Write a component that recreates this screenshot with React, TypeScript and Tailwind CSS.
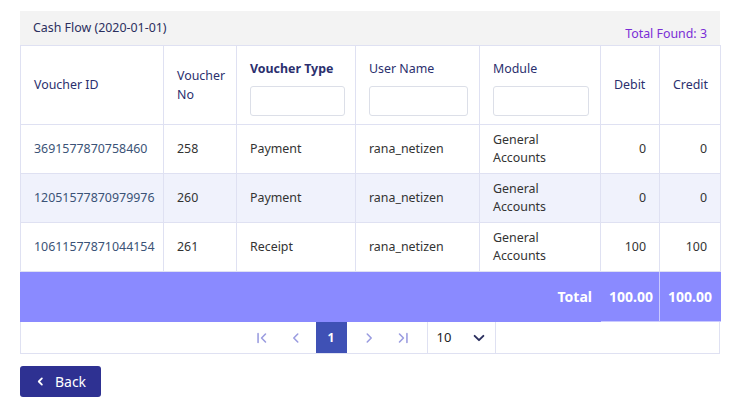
import React from 'react';

interface Voucher {
  id: string;
  no: number;
  type: string;
  user: string;
  module: string;
  debit: number;
  credit: number;
}

const rows: Voucher[] = [
  { id: '3691577870758460', no: 258, type: 'Payment', user: 'rana_netizen', module: 'General Accounts', debit: 0, credit: 0 },
  { id: '12051577870979976', no: 260, type: 'Payment', user: 'rana_netizen', module: 'General Accounts', debit: 0, credit: 0 },
  { id: '10611577871044154', no: 261, type: 'Receipt', user: 'rana_netizen', module: 'General Accounts', debit: 100, credit: 100 },
];

const ChevronLeft = ({ className, w = 1.8 }: { className?: string; w?: number }) => (
  <svg viewBox="0 0 16 16" className={className} fill="none" stroke="currentColor" strokeWidth={w} strokeLinecap="round" strokeLinejoin="round">
    <path d="M10 3.5 5.5 8l4.5 4.5" />
  </svg>
);

const ChevronRight = ({ className }: { className?: string }) => (
  <svg viewBox="0 0 16 16" className={className} fill="none" stroke="currentColor" strokeWidth="1.8" strokeLinecap="round" strokeLinejoin="round">
    <path d="M6 3.5 10.5 8 6 12.5" />
  </svg>
);

const FirstIcon = ({ className }: { className?: string }) => (
  <svg viewBox="0 0 16 16" className={className} fill="none" stroke="currentColor" strokeWidth="1.8" strokeLinecap="round" strokeLinejoin="round">
    <path d="M3.5 3v10" />
    <path d="M12 3.5 7.5 8l4.5 4.5" />
  </svg>
);

const LastIcon = ({ className }: { className?: string }) => (
  <svg viewBox="0 0 16 16" className={className} fill="none" stroke="currentColor" strokeWidth="1.8" strokeLinecap="round" strokeLinejoin="round">
    <path d="M4 3.5 8.5 8 4 12.5" />
    <path d="M12.5 3v10" />
  </svg>
);

const ChevronDown = ({ className }: { className?: string }) => (
  <svg viewBox="0 0 16 16" className={className} fill="none" stroke="currentColor" strokeWidth="2.2" strokeLinecap="round" strokeLinejoin="round">
    <path d="M3 5.5 8 10.5 13 5.5" />
  </svg>
);

const App: React.FC = () => {
  const cell = 'border border-[#dfe1f2] px-[13px]';
  return (
    <div className="min-h-screen bg-white pl-5 pt-[11px] text-[12.4px] text-[#333] [font-family:'Segoe_UI','Noto_Sans',sans-serif]">
      <div className="w-[700px]">
        {/* header bar */}
        <div className="flex h-[34px] items-start justify-between bg-[#f3f3f3] px-[13px]">
          <span className="mt-[8px] text-[#2b2f5e]">Cash Flow (2020-01-01)</span>
          <span className="mt-[14px] text-[#7a2ed6]">Total Found: 3</span>
        </div>

        <table className="w-full table-fixed border-collapse">
          <colgroup>
            <col className="w-[143px]" />
            <col className="w-[73px]" />
            <col className="w-[119px]" />
            <col className="w-[124px]" />
            <col className="w-[121px]" />
            <col className="w-[59px]" />
            <col className="w-[61px]" />
          </colgroup>
          <thead>
            <tr className="h-[79px] text-left text-[#2b2f6e]">
              <th className={`${cell} font-normal`}>Voucher ID</th>
              <th className={`${cell} font-normal leading-[19px]`}>Voucher No</th>
              <th className={`${cell} align-top pt-[14px] font-bold`}>
                <div>Voucher Type</div>
                <input className="mt-[7px] h-[30px] w-[95px] rounded-[3px] border border-[#dcdfe8] bg-white outline-none" />
              </th>
              <th className={`${cell} align-top pt-[14px] font-normal`}>
                <div>User Name</div>
                <input className="mt-[7px] h-[30px] w-[99px] rounded-[3px] border border-[#dcdfe8] bg-white outline-none" />
              </th>
              <th className={`${cell} align-top pt-[14px] font-normal`}>
                <div>Module</div>
                <input className="mt-[7px] h-[30px] w-[96px] rounded-[3px] border border-[#dcdfe8] bg-white outline-none" />
              </th>
              <th className={`${cell} font-normal`}>Debit</th>
              <th className={`${cell} font-normal`}>Credit</th>
            </tr>
          </thead>
          <tbody>
            {rows.map((r, i) => (
              <tr key={r.id} className={`h-[49px] ${i % 2 === 1 ? 'bg-[#f0f2fc]' : 'bg-white'}`}>
                <td className={`${cell} text-[#3b5377]`}>{r.id}</td>
                <td className={cell}>{r.no}</td>
                <td className={cell}>{r.type}</td>
                <td className={cell}>{r.user}</td>
                <td className={`${cell} leading-[18px]`}>{r.module}</td>
                <td className={`${cell} text-right`}>{r.debit}</td>
                <td className={`${cell} text-right`}>{r.credit}</td>
              </tr>
            ))}
            <tr className="h-[50px] bg-[#8a8aff] text-[14px] font-bold text-white">
              <td colSpan={5} className="border border-[#8a8aff] px-[8px] text-right">Total</td>
              <td className="border border-[#c9c9ff] px-[6px] text-right">100.00</td>
              <td className="border border-[#c9c9ff] border-r-[#8a8aff] px-[8px] text-right">100.00</td>
            </tr>
          </tbody>
        </table>

        {/* pagination */}
        <div className="flex h-[32px] items-stretch justify-center border border-t-0 border-[#dfe1f2]">
          <div className="flex items-center text-[#9a9ce0]">
            <button className="flex w-[34px] items-center justify-center"><FirstIcon className="h-[14px] w-[14px]" /></button>
            <button className="flex w-[34px] items-center justify-center"><ChevronLeft className="h-[14px] w-[14px]" /></button>
            <button className="ml-[3px] flex h-full w-[31px] items-center justify-center bg-[#3f51b5] text-[12px] font-bold text-white">1</button>
            <button className="ml-[5px] flex w-[34px] items-center justify-center"><ChevronRight className="h-[14px] w-[14px]" /></button>
            <button className="flex w-[34px] items-center justify-center"><LastIcon className="h-[14px] w-[14px]" /></button>
          </div>
          <div className="ml-[7px] flex w-[69px] items-center justify-between border-x border-[#dfe1f2] pl-[9px] pr-[9px] text-[13px] text-[#222]">
            <span>10</span>
            <ChevronDown className="h-[14px] w-[14px] text-[#2b2f5e]" />
          </div>
        </div>

        <button className="mt-[12px] flex h-[31px] w-[81px] items-center justify-center gap-[9px] rounded-[3px] bg-[#2e3192] text-[14px] text-white">
          <ChevronLeft className="h-[11px] w-[11px]" w={2.6} />
          <span>Back</span>
        </button>
      </div>
    </div>
  );
};

export default App;
